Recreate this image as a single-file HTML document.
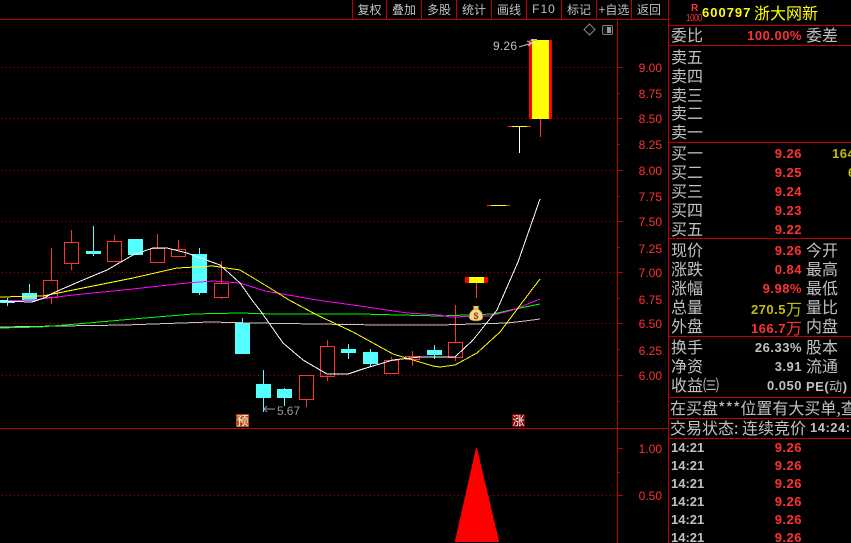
<!DOCTYPE html>
<html><head><meta charset="utf-8">
<style>
html,body{margin:0;padding:0;background:#000;width:851px;height:543px;overflow:hidden}
#p{position:relative;width:851px;height:543px;overflow:hidden;font-family:"WenQuanYi Zen Hei","Noto Sans CJK SC",sans-serif}
svg{position:absolute;left:0;top:0}
.t{position:absolute;white-space:nowrap;height:20px;line-height:20px;font-size:16px;color:#c0c0c0;margin-top:-1px}
.n{position:absolute;white-space:nowrap;height:20px;font:bold 13px/20px "Liberation Sans",sans-serif;letter-spacing:.5px;color:#ff3232;text-align:right;width:100px;left:702px;margin-top:1px}
.n i{font:normal 16px/20px "WenQuanYi Zen Hei","Noto Sans CJK SC",sans-serif;letter-spacing:0;vertical-align:-1px}
.b{position:absolute;top:0;height:19px;line-height:19px;font-size:12px;color:#c0c0c0;text-align:center;white-space:nowrap}
.a{position:absolute;left:623px;width:39px;text-align:right;height:16px;font:12px/16px "Liberation Sans",sans-serif;color:#ff3232;margin-top:1px}
.g{color:#c0c0c0}.y{color:#c0c000}
.l{position:absolute;font:bold 13px/20px "Liberation Sans",sans-serif;color:#c0c0c0;left:671px;height:20px;white-space:nowrap;margin-top:1px}
</style></head><body><div id="p">
<svg width="851" height="543" viewBox="0 0 851 543">
<g shape-rendering="crispEdges">
<g stroke="#c00000" stroke-width="1" stroke-dasharray="1 3" fill="none">
<path d="M2 67.5H617M2 118.5H617M2 170.5H617M2 221.5H617M2 272.5H617M2 323.5H617M2 375.5H617M2 495.5H617"/>
</g>
<g stroke="#c00000" fill="none">
<path d="M0 19.5H668M617.5 19V543M668.5 0V543M0 428.5H668M668 25.5H851M668 45.5H851M668 142.5H851M668 238.5H851M668 336.5H851M668 397.5H851M668 418.5H851M668 438.5H851"/>
<path d="M352.5 0V19M386.5 0V19M421.5 0V19M456.5 0V19M491.5 0V19M526.5 0V19M561.5 0V19M596.5 0V19M631.5 0V19"/>
<path d="M617 67.5H623M617 118.5H623M617 170.5H623M617 221.5H623M617 272.5H623M617 323.5H623M617 375.5H623M617 448.5H623M617 495.5H623M617 93.5H620M617 144.5H620M617 196.5H620M617 247.5H620M617 298.5H620M617 349.5H620M617 401.5H620M617 472.5H620"/>
</g>
<!-- cyan candles -->
<g fill="#54ffff" stroke="none">
<path d="M7 298h1v8h-1zM29 284h1v16h-1zM93 226h1v30h-1zM199 248h1v47h-1zM242 318h1v6h-1zM263 370h1v42h-1zM284 388h1v18h-1zM348 344h1v15h-1zM370 349h1v18h-1zM434 345h1v14h-1z"/>
<rect x="0" y="300" width="15" height="3"/>
<rect x="22" y="293" width="15" height="8"/>
<rect x="86" y="251" width="15" height="3"/>
<rect x="128" y="239" width="15" height="16"/>
<rect x="192" y="254" width="15" height="39"/>
<rect x="235" y="323" width="15" height="31"/>
<rect x="256" y="384" width="15" height="14"/>
<rect x="277" y="389" width="15" height="9"/>
<rect x="341" y="349" width="15" height="4"/>
<rect x="363" y="352" width="15" height="12"/>
<rect x="427" y="350" width="15" height="5"/>
</g>
<!-- red candles -->
<g stroke="#ff3232" fill="none">
<path d="M51.5 248V280M51.5 297V304M71.5 230V242M71.5 263V270M114.5 235V241M157.5 234V248M178.5 240V249M221.5 261V283M221.5 297V299M306.5 399V407M327.5 340V346M327.5 376V381M391.5 357V360M412.5 351V356M412.5 359V366M455.5 305V342M455.5 357V361"/>
<rect x="43.5" y="280.5" width="14" height="17" />
<rect x="64.5" y="242.5" width="14" height="21"/>
<rect x="107.5" y="241.5" width="14" height="20"/>
<rect x="150.5" y="248.5" width="14" height="14"/>
<rect x="171.5" y="249.5" width="14" height="7"/>
<rect x="214.5" y="283.5" width="14" height="14"/>
<rect x="299.5" y="375.5" width="14" height="24"/>
<rect x="320.5" y="346.5" width="14" height="30"/>
<rect x="384.5" y="360.5" width="14" height="13"/>
<rect x="405.5" y="356.5" width="14" height="3"/>
<rect x="448.5" y="342.5" width="14" height="15"/>
</g>
<!-- MAs -->
<g fill="none" stroke-width="1">
<path stroke="#c8c8c8" d="M0 327L60 326L125 325L210 322L253 323L380 325L440 325L507 323L525 321L540 319"/>
<path stroke="#00ff00" d="M0 328L40 327L77 324L133 319L193 314L240 313L273 314L360 314L440 316L493 314L515 309L540 304"/>
<path stroke="#ff00ff" d="M0 301L33 300L73 295L133 289L187 283L213 281L240 283L265 291L317 300L360 306L407 313L440 315L450 317L490 316L513 310L540 299"/>
<path stroke="#ffff00" d="M0 297L43 296L83 288L133 278L177 268L213 266L240 270L265 285L289 300L317 315L353 332L393 354L433 366L440 367L455 365L477 353L500 332L518 308L540 279"/>
<path stroke="#ffffff" d="M0 301L32 302L44 298L53 293L83 280L107 270L133 255L153 248L167 248L187 253L220 265L240 283L252 300L262 313L283 343L303 360L327 374L348 374L363 369L393 360L420 357L440 357L455 357L473 340L497 310L518 262L540 199"/>
</g>
<!-- limit-up candles -->
<rect x="465" y="277" width="23" height="6" fill="#ff0000"/><rect x="469" y="277" width="15" height="6" fill="#ffff00"/>
<rect x="476" y="283" width="1" height="15" fill="#ff3232"/>
<rect x="487" y="205" width="23" height="1" fill="#ff3232"/><rect x="491" y="205" width="15" height="1" fill="#ffff00"/>
<rect x="508" y="126" width="23" height="1" fill="#ff3232"/><rect x="512" y="126" width="15" height="1" fill="#ffff00"/>
<rect x="519" y="127" width="1" height="26" fill="#fff"/>
<rect x="529" y="40" width="23" height="79" fill="#ff0000"/><rect x="532" y="40" width="17" height="79" fill="#ffff00"/>
<rect x="540" y="119" width="1" height="18" fill="#ff3232"/>
<!-- badges -->
<rect x="236" y="414" width="13" height="13" fill="#b84a10"/>
<rect x="512" y="414" width="13" height="13" fill="#800000"/>
</g>
<!-- arrows -->
<path d="M519 47L532 43M527 41L532 43L528 46" fill="none" stroke="#c0c0c0"/>
<rect x="531" y="39" width="6" height="2" fill="#c0c0c0"/>
<path d="M264 409H275M264 409L267 406M264 409L267 412" fill="none" stroke="#999"/>
<!-- money bag -->
<path d="M473 306h6l-1 3c4 2 5 5 5 8c0 3-3 4-7 4c-4 0-7-1-7-4c0-3 1-6 5-8z" fill="#f6d98a" stroke="#6b4a10" stroke-width=".6"/>
<path d="M473 309h6" stroke="#e0a020" stroke-width="1.4"/>
<text x="476" y="319" font-family="Liberation Sans" font-weight="bold" font-size="9" fill="#a04020" text-anchor="middle">$</text>
<!-- icons -->
<path d="M589.5 24L595 29.500L589.500 35L584 29.500Z" fill="none" stroke="#8a8a8a"/>
<rect x="602.5" y="25.500" width="10" height="9" rx="1.5" fill="#111" stroke="#7a7a7a"/>
<rect x="607" y="27" width="4" height="6" fill="#999"/>
<!-- volume triangle -->
<path d="M476 448H477L499 541V542H455V541Z" fill="#ff0000" shape-rendering="crispEdges"/>
<text x="493" y="50" font-family="Liberation Sans" font-size="12" fill="#c0c0c0" textLength="24">9.26</text>
<text x="277" y="415" font-family="Liberation Sans" font-size="12" fill="#999" textLength="23">5.67</text>
<text x="242.500" y="425" font-family="WenQuanYi Zen Hei,Noto Sans CJK SC,sans-serif" font-size="12" fill="#fff" text-anchor="middle">预</text>
<text x="518.500" y="425" font-family="WenQuanYi Zen Hei,Noto Sans CJK SC,sans-serif" font-size="12" fill="#fff" text-anchor="middle">涨</text>
</svg>

<div class="b" style="left:353px;width:33px">复权</div>
<div class="b" style="left:387px;width:34px">叠加</div>
<div class="b" style="left:422px;width:34px">多股</div>
<div class="b" style="left:457px;width:34px">统计</div>
<div class="b" style="left:492px;width:34px">画线</div>
<div class="b" style="left:527px;width:34px;font-family:'Liberation Sans';letter-spacing:1px">F10</div>
<div class="b" style="left:562px;width:34px">标记</div>
<div class="b" style="left:597px;width:34px">+自选</div>
<div class="b" style="left:632px;width:34px">返回</div>

<div style="position:absolute;left:691px;top:4px;font:bold 10px/10px 'Liberation Sans';color:#ff3232">R</div>
<div style="position:absolute;left:686px;top:14px;font:10px/10px 'Liberation Sans';color:#ff3232;letter-spacing:-.6px;transform:scaleX(.8);transform-origin:left top">1000</div>
<div style="position:absolute;left:702px;top:3px;font:bold 13px/20px 'Liberation Sans';letter-spacing:1px;color:#ffff00">600797</div>
<div class="t" style="left:754px;top:3px;color:#ffff00">浙大网新</div>

<div class="a" style="top:59px">9.00</div><div class="a" style="top:85px">8.75</div><div class="a" style="top:110px">8.50</div><div class="a" style="top:136px">8.25</div><div class="a" style="top:162px">8.00</div><div class="a" style="top:188px">7.75</div><div class="a" style="top:213px">7.50</div><div class="a" style="top:240px">7.25</div><div class="a" style="top:264px">7.00</div><div class="a" style="top:291px">6.75</div><div class="a" style="top:315px">6.50</div><div class="a" style="top:342px">6.25</div><div class="a" style="top:367px">6.00</div><div class="a" style="top:440px">1.00</div><div class="a" style="top:487px">0.50</div>

<div class="t" style="left:671px;top:25px">委比</div><div class="n" style="top:25px">100.00%</div><div class="t" style="left:806px;top:25px">委差</div>
<div class="t" style="left:671px;top:47px">卖五</div><div class="t" style="left:671px;top:66px">卖四</div><div class="t" style="left:671px;top:85px">卖三</div><div class="t" style="left:671px;top:103px">卖二</div><div class="t" style="left:671px;top:122px">卖一</div>
<div class="t" style="left:671px;top:143px">买一</div><div class="n" style="top:143px">9.26</div><div class="n y" style="top:143px;left:832px;text-align:left">164</div>
<div class="t" style="left:671px;top:162px">买二</div><div class="n" style="top:162px">9.25</div><div class="n y" style="top:162px;left:848px;text-align:left">6</div>
<div class="t" style="left:671px;top:181px">买三</div><div class="n" style="top:181px">9.24</div>
<div class="t" style="left:671px;top:200px">买四</div><div class="n" style="top:200px">9.23</div>
<div class="t" style="left:671px;top:219px">买五</div><div class="n" style="top:219px">9.22</div>

<div class="t" style="left:671px;top:240px">现价</div><div class="n" style="top:240px">9.26</div><div class="t" style="left:806px;top:240px">今开</div>
<div class="t" style="left:671px;top:259px">涨跌</div><div class="n" style="top:259px">0.84</div><div class="t" style="left:806px;top:259px">最高</div>
<div class="t" style="left:671px;top:278px">涨幅</div><div class="n" style="top:278px">9.98%</div><div class="t" style="left:806px;top:278px">最低</div>
<div class="t" style="left:671px;top:297px">总量</div><div class="n y" style="top:297px">270.5<i>万</i></div><div class="t" style="left:806px;top:297px">量比</div>
<div class="t" style="left:671px;top:316px">外盘</div><div class="n" style="top:316px">166.7<i>万</i></div><div class="t" style="left:806px;top:316px">内盘</div>

<div class="t" style="left:671px;top:337px">换手</div><div class="n g" style="top:337px">26.33%</div><div class="t" style="left:806px;top:337px">股本</div>
<div class="t" style="left:671px;top:356px">净资</div><div class="n g" style="top:356px">3.91</div><div class="t" style="left:806px;top:356px">流通</div>
<div class="t" style="left:671px;top:375px">收益㈢</div><div class="n g" style="top:375px">0.050</div><div class="l" style="left:806px;top:375px;letter-spacing:.5px">PE(<span style="font:normal 13px 'WenQuanYi Zen Hei','Noto Sans CJK SC',sans-serif">动</span>)</div>

<div class="t" style="left:670px;top:398px">在买盘***位置有大买单,查</div>
<div class="t" style="left:670px;top:418px">交易状态: 连续竞价</div><div class="l" style="left:810px;top:417px;letter-spacing:.5px">14:24:</div>

<div class="l" style="top:437px">14:21</div><div class="n" style="top:437px">9.26</div>
<div class="l" style="top:455px">14:21</div><div class="n" style="top:455px">9.26</div>
<div class="l" style="top:473px">14:21</div><div class="n" style="top:473px">9.26</div>
<div class="l" style="top:491px">14:21</div><div class="n" style="top:491px">9.26</div>
<div class="l" style="top:509px">14:21</div><div class="n" style="top:509px">9.26</div>
<div class="l" style="top:527px">14:21</div><div class="n" style="top:527px">9.26</div>
</div></body></html>
